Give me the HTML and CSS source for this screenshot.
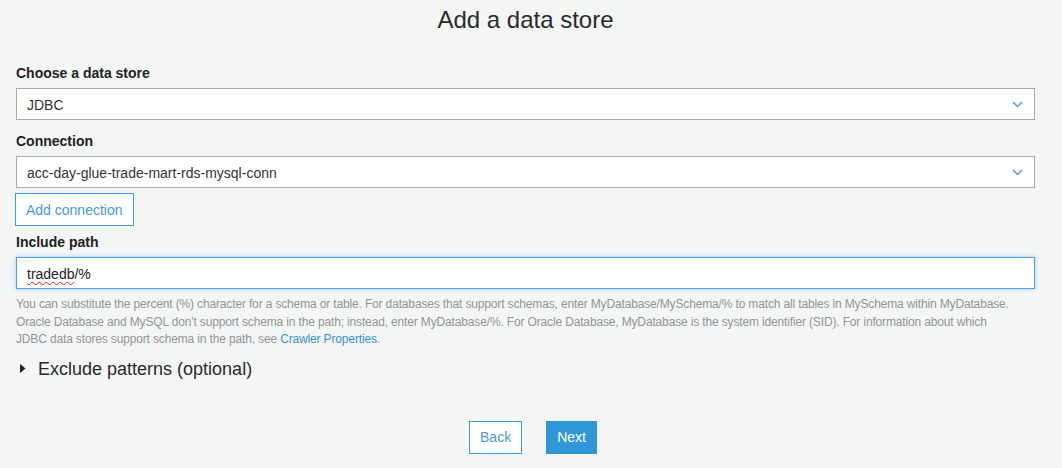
FILE: index.html
```html
<!DOCTYPE html>
<html lang="en">
<head>
<meta charset="utf-8">
<title>Add a data store</title>
<link rel="stylesheet" href="styles.css">
</head>
<body>
<main class="page">
  <h1 class="title">Add a data store</h1>

  <div class="label first">Choose a data store</div>
  <div class="select">
    <span class="select-value">JDBC</span>
    <svg class="chevron" width="11" height="7" viewBox="0 0 11 7"><polyline points="1,1 5.5,5.5 10,1" fill="none" stroke="#4a9fdc" stroke-width="1.5"/></svg>
  </div>

  <div class="label">Connection</div>
  <div class="select">
    <span class="select-value">acc-day-glue-trade-mart-rds-mysql-conn</span>
    <svg class="chevron" width="11" height="7" viewBox="0 0 11 7"><polyline points="1,1 5.5,5.5 10,1" fill="none" stroke="#4a9fdc" stroke-width="1.5"/></svg>
  </div>
  <div class="add-row"><button class="btn btn-outline">Add connection</button></div>

  <div class="label">Include path</div>
  <div class="input focused"><span class="misspelled">tradedb</span>/%</div>
  <p class="help">You can substitute the percent (%) character for a schema or table. For databases that support schemas, enter MyDatabase/MySchema/% to match all tables in MySchema within MyDatabase.<br>Oracle Database and MySQL don't support schema in the path; instead, enter MyDatabase/%. For Oracle Database, MyDatabase is the system identifier (SID). For information about which<br>JDBC data stores support schema in the path, see <a class="link" href="#">Crawler Properties</a>.</p>

  <div class="expander">
    <svg class="caret" width="6" height="9" viewBox="0 0 6 9"><polygon points="0,0 5.5,4.5 0,9" fill="#222"/></svg>
    <span>Exclude patterns (optional)</span>
  </div>

  <div class="actions">
    <button class="btn btn-outline">Back</button>
    <button class="btn btn-primary">Next</button>
  </div>
</main>
</body>
</html>
```

FILE: styles.css
```css
html, body {
  margin: 0;
  padding: 0;
  background: #f4f5f5;
}

body {
  font-family: "Liberation Sans", Arial, sans-serif;
  color: #333;
}

.page {
  padding: 0 27px 0 16px;
  display: flex;
  flex-direction: column;
}

.title {
  margin: 0;
  font-size: 24px;
  font-weight: normal;
  line-height: 40px;
  text-align: center;
  color: #2b2b2b;
}

.label {
  font-size: 14px;
  font-weight: bold;
  line-height: 18px;
  color: #222;
  margin: 12px 0 6px;
}

.label.first {
  margin-top: 24px;
}

.select {
  height: 32px;
  box-sizing: border-box;
  border: 1px solid #a9abac;
  background: #fff;
  display: flex;
  align-items: center;
  justify-content: space-between;
  padding: 0 11px 0 10px;
  font-size: 14px;
  color: #333;
}

.select-value {
  padding-top: 1px;
}

.chevron {
  display: block;
  margin-top: 1px;
}

.add-row {
  display: flex;
  margin-top: 5px;
  margin-left: -1px;
}

.add-row + .label {
  margin-top: 7px;
}

.btn {
  font-family: "Liberation Sans", Arial, sans-serif;
  font-size: 14px;
  height: 33px;
  box-sizing: border-box;
  padding: 0 10px;
  cursor: pointer;
}

.btn-outline {
  background: #fff;
  border: 1px solid #3d9be0;
  color: #4a9ad8;
}

.btn-primary {
  background: #2f97d7;
  border: 1px solid #2f97d7;
  color: #fff;
}

.input {
  height: 32px;
  box-sizing: border-box;
  border: 1px solid #4ca5e2;
  box-shadow: 0 0 4px rgba(60, 150, 220, 0.45);
  background: #fff;
  display: flex;
  align-items: center;
  padding: 1px 10px 0;
  font-size: 14px;
  color: #222;
}

.misspelled {
  text-decoration: underline wavy #e02020;
  text-decoration-thickness: 1px;
  text-underline-offset: 2px;
}

.help {
  margin: 7px 0 0;
  font-size: 12px;
  line-height: 17.5px;
  letter-spacing: -0.15px;
  white-space: nowrap;
  color: #939697;
}

.link {
  color: #3b93d3;
  text-decoration: none;
}

.expander {
  display: flex;
  align-items: center;
  margin-top: 8px;
  padding-left: 4px;
  font-size: 18px;
  line-height: 24px;
  color: #2a2a2a;
}

.caret {
  display: block;
  margin-right: 12px;
}

.actions {
  display: flex;
  justify-content: center;
  gap: 24px;
  margin-top: 40px;
  padding-left: 15px;
}
```
